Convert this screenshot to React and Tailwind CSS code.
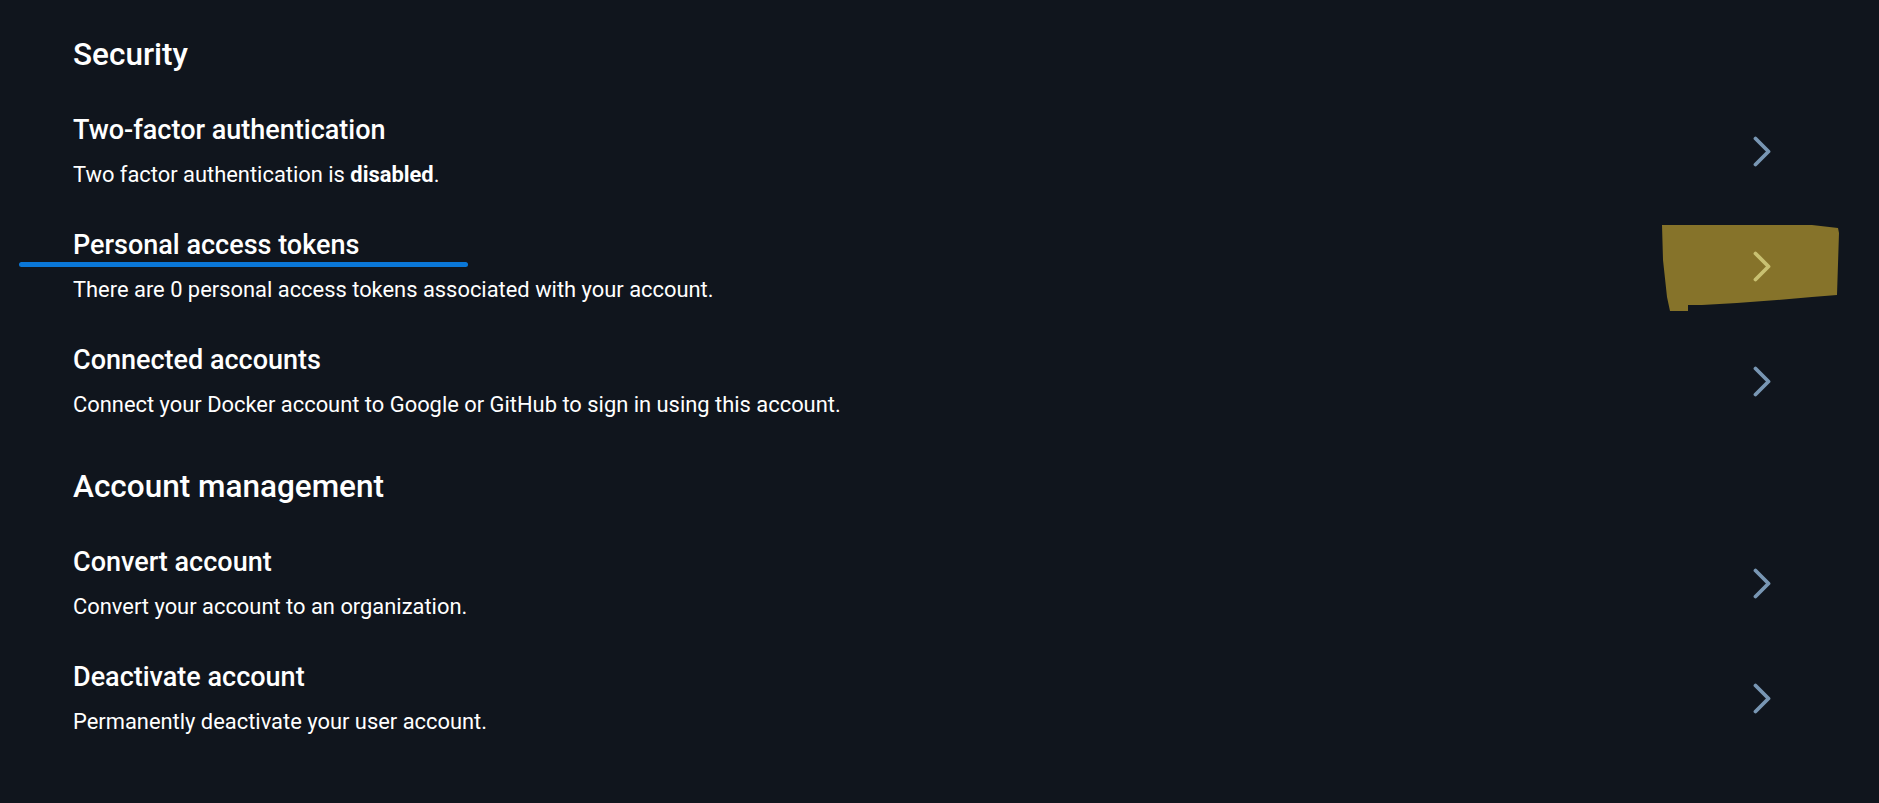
import React from 'react';

const SECTIONS = [
  {
    title: 'Security',
    rows: [
      { title: 'Two-factor authentication', desc: <>Two factor authentication is <span className="font-bold">disabled</span>.</> },
      { title: 'Personal access tokens', desc: 'There are 0 personal access tokens associated with your account.', marked: true },
      { title: 'Connected accounts', desc: 'Connect your Docker account to Google or GitHub to sign in using this account.' },
    ],
  },
  {
    title: 'Account management',
    rows: [
      { title: 'Convert account', desc: 'Convert your account to an organization.' },
      { title: 'Deactivate account', desc: 'Permanently deactivate your user account.' },
    ],
  },
];

function Chevron({ color }) {
  return (
    <svg width="18" height="31" viewBox="0 0 18 31" fill="none">
      <polyline points="2.5,2.5 15.5,15.5 2.5,28.5" stroke={color} strokeWidth="3.8" strokeLinecap="round" strokeLinejoin="round" />
    </svg>
  );
}

export default function App() {
  return (
    <div className="relative w-full min-h-[803px] bg-[#10151d] text-white overflow-hidden" style={{ fontFamily: "Roboto, 'Noto Sans', sans-serif" }}>
      {/* highlighter mark */}
      <svg className="absolute left-[1662px] top-[225px]" width="178" height="87" viewBox="0 0 178 87">
        <path d="M0 0 L150 0 L176 3 L177 8 L175 70 L150 72 L115 75 L75 78 L40 80 L26 80 L26 86 L8 86 L5 72 L1 35 Z" fill="#86732a" />
      </svg>
      {/* pen underline */}
      <div className="absolute left-[19px] top-[262px] w-[449px] h-[5px] rounded-full bg-[#0a77d8]" />

      <div className="relative pl-[73px] pr-[108px] pt-[35px] flex flex-col gap-[28px]">
        {SECTIONS.map(section => (
          <section key={section.title} className="flex flex-col">
            <h2 className="text-[31.5px] leading-[40px] font-medium mb-[19px]">{section.title}</h2>
            {section.rows.map(row => (
              <div key={row.title} className="flex items-center justify-between py-[20px]">
                <div className="flex flex-col gap-[15px]">
                  <div className="text-[27px] leading-[32px] font-medium">{row.title}</div>
                  <div className="text-[21.9px] leading-[28px]">{row.desc}</div>
                </div>
                <Chevron color={row.marked ? '#c9c171' : '#7896b3'} />
              </div>
            ))}
          </section>
        ))}
      </div>
    </div>
  );
}
